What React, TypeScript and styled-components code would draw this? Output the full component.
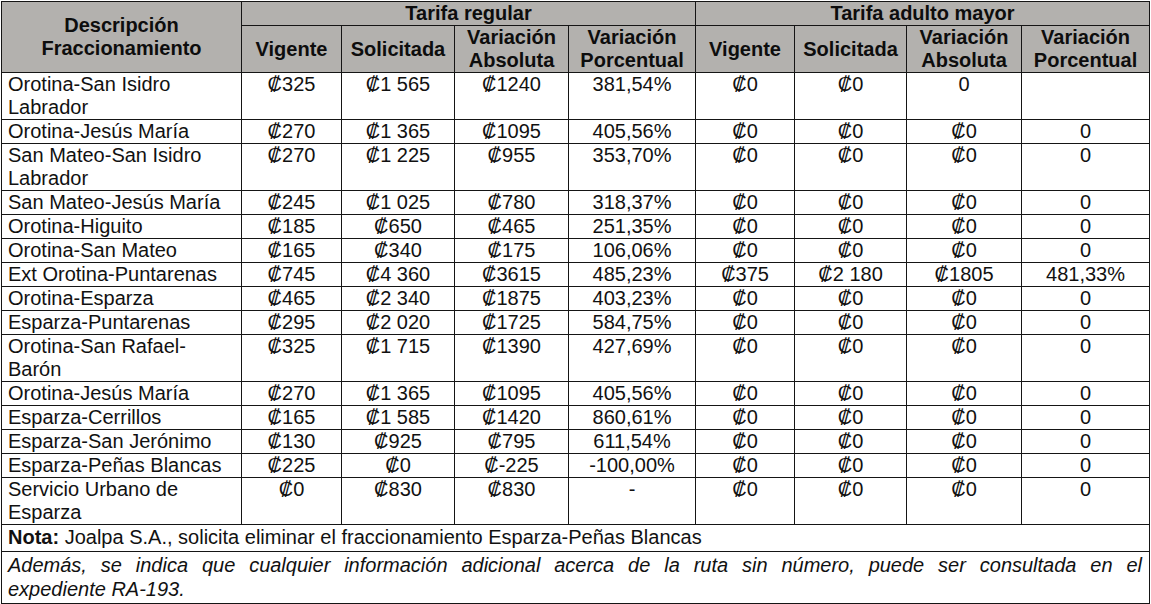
import styled, { createGlobalStyle } from "styled-components";

type Row = {
  route: string;
  regular: string[];
  senior: string[];
};

const rows: Row[] = [
  { route: "Orotina-San Isidro Labrador", regular: ["₡325", "₡1 565", "₡1240", "381,54%"], senior: ["₡0", "₡0", "0", ""] },
  { route: "Orotina-Jesús María", regular: ["₡270", "₡1 365", "₡1095", "405,56%"], senior: ["₡0", "₡0", "₡0", "0"] },
  { route: "San Mateo-San Isidro Labrador", regular: ["₡270", "₡1 225", "₡955", "353,70%"], senior: ["₡0", "₡0", "₡0", "0"] },
  { route: "San Mateo-Jesús María", regular: ["₡245", "₡1 025", "₡780", "318,37%"], senior: ["₡0", "₡0", "₡0", "0"] },
  { route: "Orotina-Higuito", regular: ["₡185", "₡650", "₡465", "251,35%"], senior: ["₡0", "₡0", "₡0", "0"] },
  { route: "Orotina-San Mateo", regular: ["₡165", "₡340", "₡175", "106,06%"], senior: ["₡0", "₡0", "₡0", "0"] },
  { route: "Ext Orotina-Puntarenas", regular: ["₡745", "₡4 360", "₡3615", "485,23%"], senior: ["₡375", "₡2 180", "₡1805", "481,33%"] },
  { route: "Orotina-Esparza", regular: ["₡465", "₡2 340", "₡1875", "403,23%"], senior: ["₡0", "₡0", "₡0", "0"] },
  { route: "Esparza-Puntarenas", regular: ["₡295", "₡2 020", "₡1725", "584,75%"], senior: ["₡0", "₡0", "₡0", "0"] },
  { route: "Orotina-San Rafael-Barón", regular: ["₡325", "₡1 715", "₡1390", "427,69%"], senior: ["₡0", "₡0", "₡0", "0"] },
  { route: "Orotina-Jesús María", regular: ["₡270", "₡1 365", "₡1095", "405,56%"], senior: ["₡0", "₡0", "₡0", "0"] },
  { route: "Esparza-Cerrillos", regular: ["₡165", "₡1 585", "₡1420", "860,61%"], senior: ["₡0", "₡0", "₡0", "0"] },
  { route: "Esparza-San Jerónimo", regular: ["₡130", "₡925", "₡795", "611,54%"], senior: ["₡0", "₡0", "₡0", "0"] },
  { route: "Esparza-Peñas Blancas", regular: ["₡225", "₡0", "₡-225", "-100,00%"], senior: ["₡0", "₡0", "₡0", "0"] },
  { route: "Servicio Urbano de Esparza", regular: ["₡0", "₡830", "₡830", "-"], senior: ["₡0", "₡0", "₡0", "0"] },
];

const colWidths = [240, 100, 113, 114, 127, 99, 112, 115, 128];

const SubHeads = () => (
  <>
    <SubHead>Vigente</SubHead>
    <SubHead>Solicitada</SubHead>
    <SubHead>
      Variación
      <br />
      Absoluta
    </SubHead>
    <SubHead>
      Variación
      <br />
      Porcentual
    </SubHead>
  </>
);

const App = () => {
  return (
    <>
      <GlobalStyle />
      <Page>
        <Table>
          <colgroup>
            {colWidths.map((w, i) => (
              <col key={i} style={{ width: w }} />
            ))}
          </colgroup>
          <thead>
            <tr>
              <GroupHead rowSpan={2}>
                Descripción
                <br />
                Fraccionamiento
              </GroupHead>
              <GroupHead colSpan={4}>Tarifa regular</GroupHead>
              <GroupHead colSpan={4}>Tarifa adulto mayor</GroupHead>
            </tr>
            <tr>
              <SubHeads />
              <SubHeads />
            </tr>
          </thead>
          <tbody>
            {rows.map((row, i) => (
              <tr key={i}>
                <RouteCell>{row.route}</RouteCell>
                {[...row.regular, ...row.senior].map((v, j) => (
                  <ValueCell key={j}>{v}</ValueCell>
                ))}
              </tr>
            ))}
            <tr>
              <NoteCell colSpan={9}>
                <b>Nota:</b> Joalpa S.A., solicita eliminar el fraccionamiento
                Esparza-Peñas Blancas
              </NoteCell>
            </tr>
            <tr>
              <RemarkCell colSpan={9}>
                Además, se indica que cualquier información adicional acerca de
                la ruta sin número, puede ser consultada en el{" "}
                <LastLine>expediente RA-193.</LastLine>
              </RemarkCell>
            </tr>
          </tbody>
        </Table>
      </Page>
    </>
  );
};

export default App;

const GlobalStyle = createGlobalStyle`
  body {
    margin: 0;
    background: #ffffff;
    font-family: "Liberation Sans", Arial, "DejaVu Sans", sans-serif;
    color: #111111;
  }
`;

const Page = styled.div`
  padding: 1px 0 0 1px;
`;

const Table = styled.table`
  width: 1148px;
  table-layout: fixed;
  border-collapse: collapse;
  font-size: 20px;
  line-height: 23px;
  td,
  th {
    border: 1px solid #151515;
    padding: 0;
  }
`;

const GroupHead = styled.th`
  background: #b3b1ae;
  font-weight: bold;
  text-align: center;
  vertical-align: middle;
  color: #0d0d0d;
`;

const SubHead = styled.th`
  background: #b3b1ae;
  font-weight: bold;
  text-align: center;
  vertical-align: middle;
  color: #0d0d0d;
`;

const RouteCell = styled.td`
  text-align: left;
  vertical-align: top;
  padding: 0 6px !important;
`;

const ValueCell = styled.td`
  text-align: center;
  vertical-align: top;
  white-space: nowrap;
`;

const NoteCell = styled.td`
  text-align: left;
  padding: 1px 6px 2px !important;
  b {
    font-weight: bold;
  }
`;

const RemarkCell = styled.td`
  text-align: justify;
  font-style: italic;
  line-height: 24px;
  word-spacing: 4px;
  padding: 1px 7px 2px 6px !important;
`;

const LastLine = styled.span`
  word-spacing: normal;
`;
